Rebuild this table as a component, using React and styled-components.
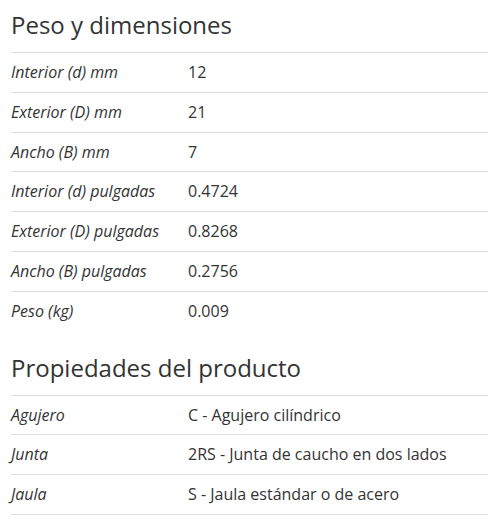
import styled, { createGlobalStyle } from "styled-components";

const GlobalStyle = createGlobalStyle`
    body {
        margin: 0;
        background: #fff;
        font-family: "Open Sans", "Liberation Sans", sans-serif;
        color: #333;
    }
`;

const Page = styled.div`
    padding: 10px 0 0 11px;
`;

const Section = styled.section`
    & + & {
        margin-top: 22px;
    }
`;

const Title = styled.h2`
    margin: 0 0 12px;
    font-size: 24px;
    font-weight: 400;
    line-height: 30px;
    color: #333;
`;

const Row = styled.div`
    display: grid;
    grid-template-columns: 177px 1fr;
    border-top: 1px solid #dedede;
    padding: 8px 0;
    font-size: 16px;
    line-height: 22.8px;
`;

const Label = styled.span`
    font-style: italic;
`;

const Value = styled.span``;

const dimensions = [
    ["Interior (d) mm", "12"],
    ["Exterior (D) mm", "21"],
    ["Ancho (B) mm", "7"],
    ["Interior (d) pulgadas", "0.4724"],
    ["Exterior (D) pulgadas", "0.8268"],
    ["Ancho (B) pulgadas", "0.2756"],
    ["Peso (kg)", "0.009"],
];

const properties = [
    ["Agujero", "C - Agujero cilíndrico"],
    ["Junta", "2RS - Junta de caucho en dos lados"],
    ["Jaula", "S - Jaula estándar o de acero"],
    ["", ""],
];

export default function App() {
    const rows = (list) =>
        list.map(([label, value], index) => (
            <Row key={index}>
                <Label>{label}</Label>
                <Value>{value}</Value>
            </Row>
        ));

    return (
        <>
            <GlobalStyle />
            <Page>
                <Section>
                    <Title>Peso y dimensiones</Title>
                    {rows(dimensions)}
                </Section>
                <Section>
                    <Title>Propiedades del producto</Title>
                    {rows(properties)}
                </Section>
            </Page>
        </>
    );
}
